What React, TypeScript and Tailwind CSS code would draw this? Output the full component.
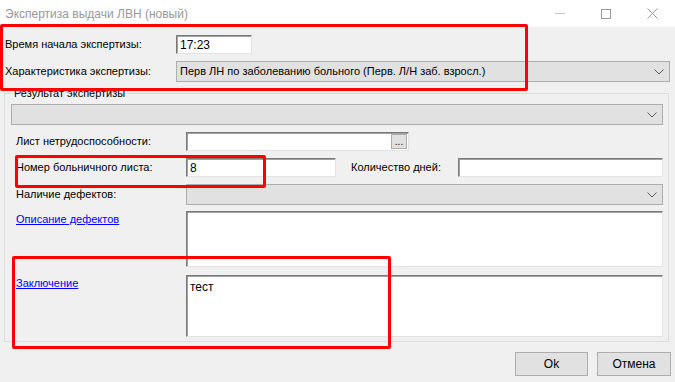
import React from 'react';

const font = { fontFamily: '"Liberation Sans", Arial, sans-serif' };

function Chevron() {
  return (
    <svg width="10" height="6" viewBox="0 0 10 6">
      <path d="M0.5 0.5 L5 5 L9.5 0.5" fill="none" stroke="#5a5a5a" strokeWidth="1" />
    </svg>
  );
}

function TextBox({ className = '', value = '' }: { className?: string; value?: string }) {
  return (
    <div
      className={`bg-white border border-t-[#7a7a7a] border-l-[#7a7a7a] border-r-[#e3e3e3] border-b-[#e3e3e3] shadow-[inset_1px_1px_0_#a0a0a0] pl-[3px] pt-[2px] text-[12px] leading-[15px] text-black ${className}`}
    >
      {value}
    </div>
  );
}

function Combo({ className = '', value = '' }: { className?: string; value?: string }) {
  return (
    <div
      className={`bg-[#e1e1e1] border border-[#adadad] flex items-center justify-between pl-[3px] pr-[5px] text-[11px] text-black ${className}`}
    >
      <span>{value}</span>
      <Chevron />
    </div>
  );
}

export default function App() {
  return (
    <div className="relative w-[675px] h-[382px] overflow-hidden bg-[#f0f0f0] text-[11px] text-black" style={font}>
      {/* title bar */}
      <div className="h-[27px] bg-white flex items-center justify-between pl-[5px]">
        <span className="text-[12px] text-[#999999]">Экспертиза выдачи ЛВН (новый)</span>
        <div className="flex items-center h-full">
          <div className="w-[46px] h-full flex items-center justify-center">
            <div className="w-[10px] h-px bg-[#c8c8c8]" />
          </div>
          <div className="w-[46px] h-full flex items-center justify-center">
            <div className="w-[10px] h-[10px] border border-[#999999]" />
          </div>
          <div className="w-[46px] h-full flex items-center justify-center">
            <svg width="11" height="11" viewBox="0 0 11 11">
              <path d="M0.5 0.5 L10.5 10.5 M10.5 0.5 L0.5 10.5" stroke="#999999" strokeWidth="1" />
            </svg>
          </div>
        </div>
      </div>

      {/* top rows */}
      <div className="flex items-center h-[19px] mt-[8px] pl-[5px]">
        <span className="w-[171px]">Время начала экспертизы:</span>
        <TextBox className="w-[76px] h-[19px]" value="17:23" />
      </div>
      <div className="flex items-center h-[21px] mt-[7px] pl-[5px]">
        <span className="w-[171px]">Характеристика экспертизы:</span>
        <Combo className="w-[494px] h-[21px]" value="Перв ЛН по заболеванию больного (Перв. Л/Н заб. взросл.)" />
      </div>

      {/* group box */}
      <fieldset className="ml-[4px] w-[665px] mt-[5px] border border-[#dcdcdc] pl-[6px] pr-[5px] pb-[4px]">
        <legend className="ml-[2px] px-[1px] text-[11px] leading-[13px]">Результат экспертизы</legend>
        <Combo className="h-[21px] mt-[4px]" />

        <div className="flex items-center h-[19px] mt-[7px]">
          <span className="w-[175px] pl-[5px]">Лист нетрудоспособности:</span>
          <div className="w-[223px] h-[19px] bg-white border border-t-[#7a7a7a] border-l-[#7a7a7a] border-r-[#e3e3e3] border-b-[#e3e3e3] shadow-[inset_1px_1px_0_#a0a0a0] flex justify-end p-px">
            <div className="w-[16px] h-full bg-[#e1e1e1] border border-[#adadad] flex items-end justify-center text-[10px] leading-[12px]">...</div>
          </div>
        </div>

        <div className="flex items-center h-[19px] mt-[7px]">
          <span className="w-[175px] pl-[5px]">Номер больничного листа:</span>
          <TextBox className="w-[150px] h-[19px]" value="8" />
          <span className="w-[107px] ml-[15px]">Количество дней:</span>
          <TextBox className="w-[205px] h-[19px]" />
        </div>

        <div className="flex items-center h-[21px] mt-[7px]">
          <span className="w-[175px] pl-[5px]">Наличие дефектов:</span>
          <Combo className="w-[477px] h-[21px]" />
        </div>

        <div className="flex mt-[6px]">
          <span className="w-[175px] pl-[5px] pt-[2px] leading-[13px] text-[#0000ff] underline">Описание дефектов</span>
          <TextBox className="w-[477px] h-[56px]" />
        </div>

        <div className="flex mt-[8px]">
          <span className="w-[175px] pl-[5px] pt-[2px] leading-[13px] text-[#0000ff] underline">Заключение</span>
          <TextBox className="w-[477px] h-[62px] pt-[4px]" value="тест" />
        </div>
      </fieldset>

      {/* buttons */}
      <div className="flex justify-end gap-[9px] pr-[4px] mt-[10px]">
        <button className="w-[73px] h-[24px] bg-[#e1e1e1] border border-[#adadad] text-[12px]">Ok</button>
        <button className="w-[74px] h-[24px] bg-[#e1e1e1] border border-[#adadad] text-[12px]">Отмена</button>
      </div>

      {/* red annotation frames */}
      <div className="absolute left-0 top-[24px] w-[528px] h-[67px] border-[3px] border-[#ff0000] rounded-[2px]" />
      <div className="absolute left-[15px] top-[155px] w-[251px] h-[33px] border-[3px] border-[#ff0000] rounded-[2px]" />
      <div className="absolute left-[12px] top-[256px] w-[379px] h-[93px] border-[3px] border-[#ff0000] rounded-[2px]" />
    </div>
  );
}
